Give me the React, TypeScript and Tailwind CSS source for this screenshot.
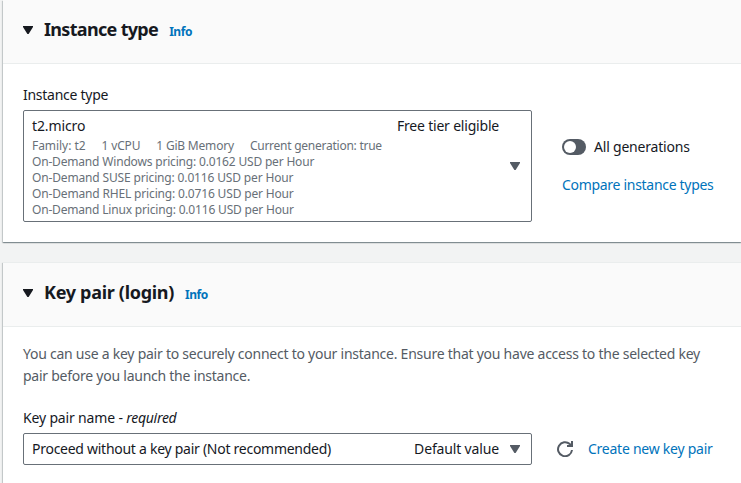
import type { ReactNode } from "react";

function Caret({ className = "" }: { className?: string }) {
  return (
    <svg viewBox="0 0 10 8" className={`h-2 w-2.5 shrink-0 ${className}`} fill="currentColor">
      <path d="M0 0h10v1L5.6 8H4.4L0 1z" />
    </svg>
  );
}

function RefreshIcon() {
  return (
    <svg viewBox="0 0 16 16" className="h-4 w-4 shrink-0 text-[#545b64]" fill="none" stroke="currentColor" strokeWidth="2">
      <path d="M15 9a7 7 0 1 1-2.2-5.9L15 5" />
      <path d="M15 0v5h-5" />
    </svg>
  );
}

type PanelProps = {
  title: string;
  titleClass: string;
  headerClass: string;
  panelClass: string;
  children: ReactNode;
};

function Panel({ title, titleClass, headerClass, panelClass, children }: PanelProps) {
  return (
    <section className={`border-t bg-white shadow-[0_1px_1px_0_rgba(0,28,36,0.3),1px_1px_1px_0_rgba(0,28,36,0.1),-1px_1px_1px_0_rgba(0,28,36,0.15)] ${panelClass}`}>
      <header className={`flex items-center border-b border-[#eaeded] bg-[#fafafa] pl-5 ${headerClass}`}>
        <Caret className="mr-[11px]" />
        <h2 className={`-mt-0.5 text-[18px] leading-[22px] font-bold ${titleClass}`}>{title}</h2>
        <a className="mt-1 ml-[11px] text-[12px] leading-4 font-bold tracking-[-0.45px] text-[#0073bb]">Info</a>
      </header>
      {children}
    </section>
  );
}

const prices = [
  { text: "On-Demand Windows pricing: 0.0162 USD per Hour", tracking: "tracking-[-0.18px]" },
  { text: "On-Demand SUSE pricing: 0.0116 USD per Hour", tracking: "tracking-[-0.15px]" },
  { text: "On-Demand RHEL pricing: 0.0716 USD per Hour", tracking: "tracking-[-0.16px]" },
  { text: "On-Demand Linux pricing: 0.0116 USD per Hour", tracking: "tracking-[-0.18px]" },
];

export default function App() {
  return (
    <main className="h-[483px] w-[741px] overflow-hidden bg-[#f2f3f3] pl-[3px] font-['Noto_Sans',sans-serif] text-[14px] leading-[22px] whitespace-nowrap text-[#16191f]">
      <Panel title="Instance type" titleClass="tracking-[-0.68px]" headerClass="h-[63px] pb-1" panelClass="border-[#fafafa]">
        <div className="h-[178px] px-5 pt-5">
          <div className="tracking-[-0.27px]">Instance type</div>
          <div className="mt-1 flex">
            <div className="flex h-[112px] w-[509px] shrink-0 items-center rounded-xs border border-[#687078] pr-[11px] pl-2">
              <div className="flex-1">
                <div className="flex justify-between pr-[11px]">
                  <span className="tracking-[-0.12px]">t2.micro</span>
                  <span className="tracking-[-0.2px]">Free tier eligible</span>
                </div>
                <div className="relative top-px text-[12px] leading-4 text-[#687078]">
                  <div className="flex gap-4">
                    <span className="tracking-[-0.05px]">Family: t2</span>
                    <span className="tracking-[-0.15px]">1 vCPU</span>
                    <span className="tracking-[-0.2px]">1 GiB Memory</span>
                    <span className="tracking-[-0.25px]">Current generation: true</span>
                  </div>
                  {prices.map((p) => (
                    <div key={p.text} className={p.tracking}>
                      {p.text}
                    </div>
                  ))}
                </div>
              </div>
              <Caret className="text-[#545b64]" />
            </div>
            <div className="ml-[30px] pt-[26px]">
              <div className="flex items-center gap-2">
                <span className="flex h-4 w-6 items-center rounded-full bg-[#545b64] pl-0.5">
                  <span className="h-3 w-3 rounded-full bg-white" />
                </span>
                <span className="tracking-[-0.2px]">All generations</span>
              </div>
              <a className="mt-4 block tracking-[-0.3px] text-[#0073bb]">Compare instance types</a>
            </div>
          </div>
        </div>
      </Panel>
      <div className="h-5" />
      <Panel title="Key pair (login)" titleClass="tracking-[-0.3px]" headerClass="h-16 pb-[3px]" panelClass="border-[#eaeded]">
        <div className="h-[178px] px-5 pt-4">
          <p className="tracking-[-0.248px] text-[#545b64]">
            You can use a key pair to securely connect to your instance. Ensure that you have access to the selected key
            <br />
            pair before you launch the instance.
          </p>
          <div className="mt-5">
            <span className="tracking-[-0.16px]">Key pair name - </span>
            <em className="tracking-[-0.3px]">required</em>
          </div>
          <div className="mt-1 flex items-center">
            <div className="flex h-8 w-[509px] shrink-0 items-center rounded-xs border border-[#687078] pr-[11px] pl-2">
              <span className="flex-1 tracking-[-0.27px]">Proceed without a key pair (Not recommended)</span>
              <span className="mr-[11px] tracking-[-0.15px]">Default value</span>
              <Caret className="text-[#545b64]" />
            </div>
            <span className="ml-[25px]">
              <RefreshIcon />
            </span>
            <a className="ml-[15px] tracking-[-0.25px] text-[#0073bb]">Create new key pair</a>
          </div>
        </div>
      </Panel>
    </main>
  );
}
